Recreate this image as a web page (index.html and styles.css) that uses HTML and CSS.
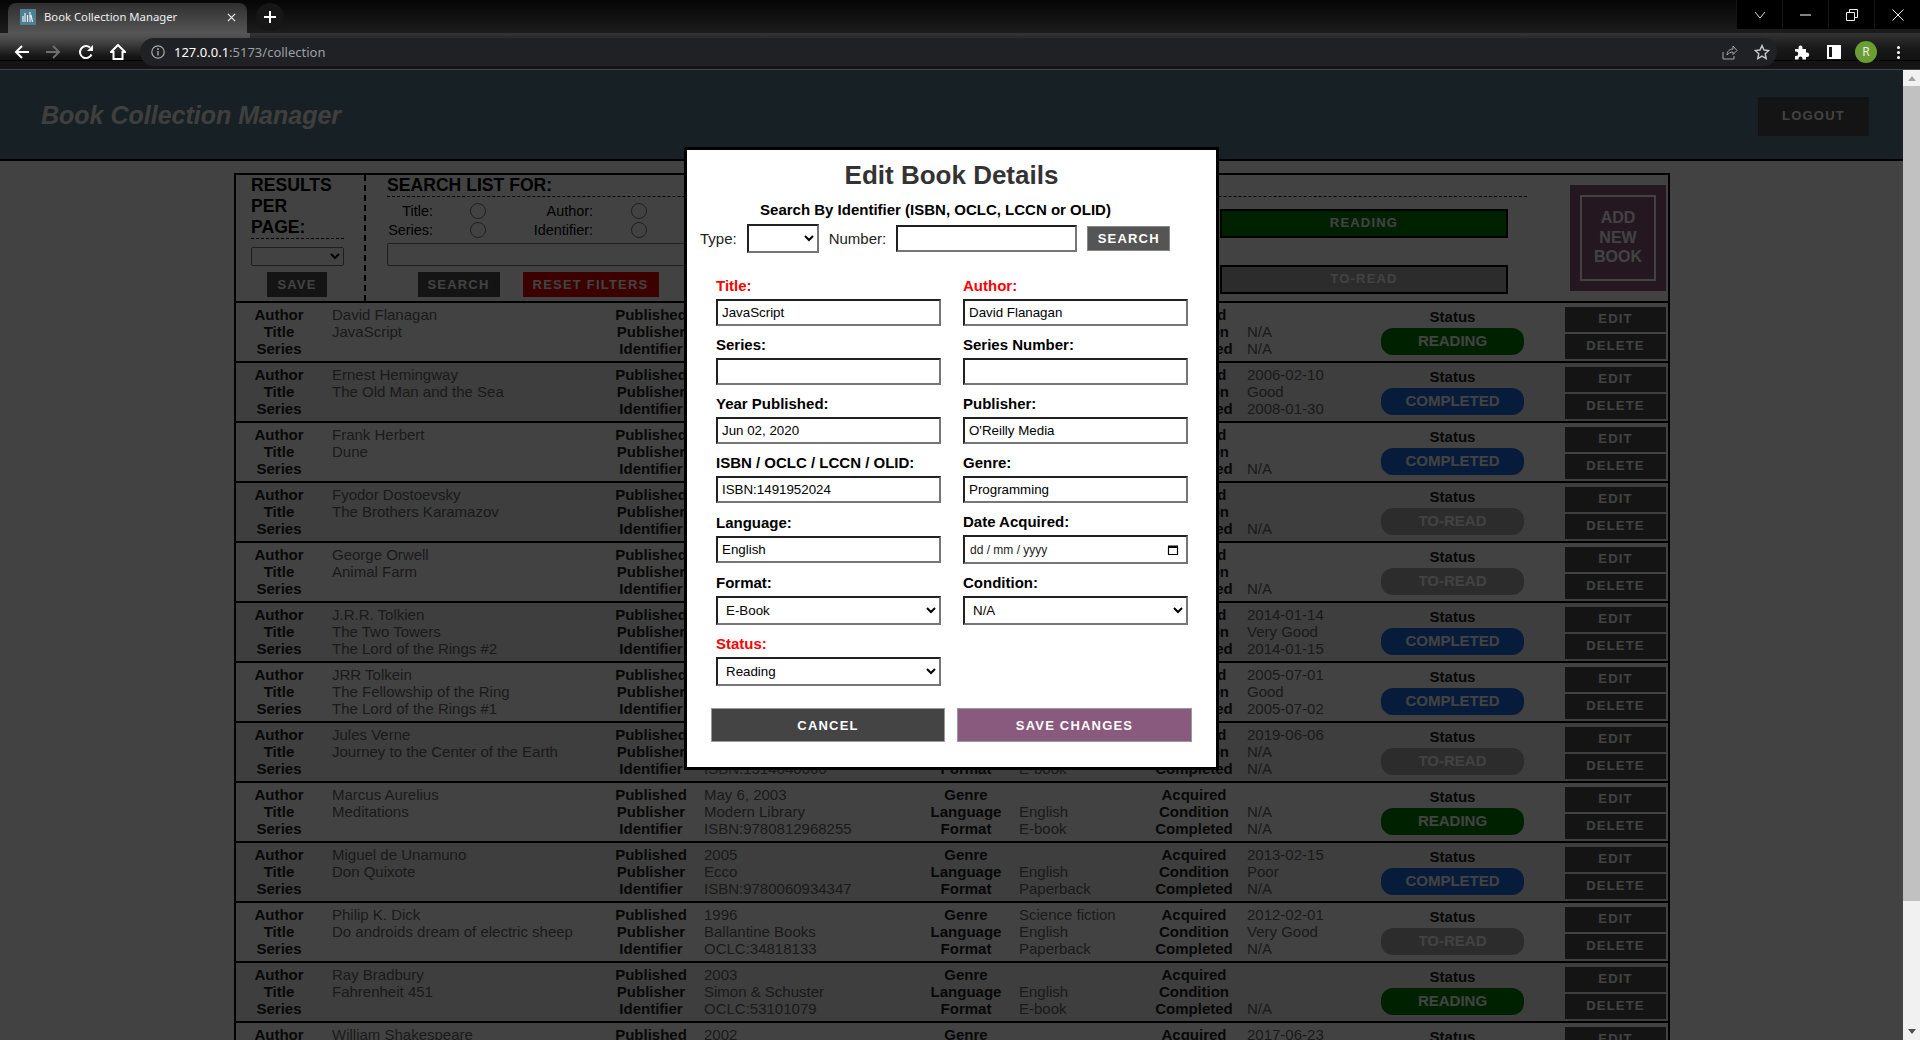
FILE: index.html
```html
<!DOCTYPE html>
<html lang="en">
<head>
    <meta charset="UTF-8">
    <title>Book Collection Manager</title>
    <link rel="stylesheet" href="styles.css">
</head>
<body>
    <div class="browser-top">
        <div class="tab-strip">
            <div class="tab">
                <svg class="favicon" viewBox="0 0 16 16"><rect width="16" height="16" fill="#4f7f92"/><path d="M3 13V7M5 13V4M7.5 13V6M10 13V3M12.5 13l-1.5-7" stroke="#e8eef0" stroke-width="1.2" fill="none"/></svg>
                <span class="tab-title">Book Collection Manager</span>
                <svg class="tab-close" viewBox="0 0 10 10"><path d="M1 1l8 8M9 1l-8 8" stroke="#e8e8e8" stroke-width="1.4"/></svg>
            </div>
            <div class="new-tab"><svg viewBox="0 0 12 12" width="12" height="12"><path d="M6 0v12M0 6h12" stroke="#fff" stroke-width="2"/></svg></div>
            <div class="window-controls">
                <div class="win-btn"><svg viewBox="0 0 12 8" width="12" height="8"><path d="M1 1l5 6 5-6" stroke="#ddd" fill="none"/></svg></div>
                <div class="win-btn"><svg viewBox="0 0 12 2" width="11" height="2"><path d="M0 1h12" stroke="#eee" stroke-width="1.2"/></svg></div>
                <div class="win-btn"><svg viewBox="0 0 12 12" width="12" height="12"><path d="M.5 3.5h8v8h-8zM3.5 3.5v-3h8v8h-3" stroke="#eee" fill="none"/></svg></div>
                <div class="win-btn"><svg viewBox="0 0 12 12" width="12" height="12"><path d="M.5.5l11 11M11.5.5l-11 11" stroke="#eee"/></svg></div>
            </div>
        </div>
        <div class="toolbar">
            <svg class="nav-icon" viewBox="0 0 16 16"><path d="M15 8H2M8 2L2 8l6 6" stroke="#fff" stroke-width="2" fill="none"/></svg>
            <svg class="nav-icon" viewBox="0 0 16 16"><path d="M1 8h13M8 2l6 6-6 6" stroke="#6e6e6e" stroke-width="2" fill="none"/></svg>
            <svg class="nav-icon" viewBox="0 0 16 16"><path d="M13.5 10.5A6 6 0 1 1 12 3.6" stroke="#fff" stroke-width="2" fill="none"/><path d="M9 7h6V1z" fill="#fff"/></svg>
            <svg class="nav-icon" viewBox="0 0 16 16"><path d="M8 1L1 8h2.5v7h9V8H15z" stroke="#fff" stroke-width="2" fill="none"/></svg>
            <div class="omnibox">
                <svg class="info-icon" viewBox="0 0 14 14"><circle cx="7" cy="7" r="6.2" stroke="#aaa" stroke-width="1.2" fill="none"/><path d="M7 6v4.5" stroke="#aaa" stroke-width="1.4"/><circle cx="7" cy="4" r=".9" fill="#aaa"/></svg>
                <span class="url"><b>127.0.0.1</b>:5173/collection</span>
                <svg class="omni-icon omni-share" viewBox="0 0 16 16"><path d="M1 8v7h11v-3M5 11c0-4 3-6 6-6V2l4 4.500-4 4V8c-2.500 0-4.500 1-6 3z" stroke="#a8a8a8" fill="none"/></svg>
                <svg class="omni-icon" viewBox="0 0 16 16"><path d="M8 1.500l2 4.500 4.800.5-3.600 3.200 1 4.800L8 12.100l-4.200 2.400 1-4.800L1.200 6.500 6 6z" stroke="#c8c8c8" stroke-width="1.400" fill="none"/></svg>
            </div>
            <svg class="ext-icon" viewBox="0 0 16 16"><path d="M1 5h3.500V3.500a2 2 0 0 1 4 0V5H12v3.500h1a2.200 2.200 0 0 1 0 4.500h-1v2.500H8.500v-1a2 2 0 0 0-4 0v1H1v-3.500h1a2.200 2.200 0 0 0 0-4.500H1z" fill="#fff"/></svg>
            <div class="side-icon"></div>
            <div class="avatar">R</div>
            <div class="menu-dots"><i></i><i></i><i></i></div>
        </div>
    </div>

    <div class="page">
        <div class="content">
            <header class="app-header">
                <h1>Book Collection Manager</h1>
                <button class="btn logout">LOGOUT</button>
            </header>

            <section class="collection">
                <div class="filters">
                    <div class="per-page">
                        <h3>RESULTS PER PAGE:</h3>
                        <select class="per-page-select"></select>
                        <button class="btn save-btn">SAVE</button>
                    </div>
                    <div class="search-list">
                        <h3>SEARCH LIST FOR:</h3>
                        <div class="search-body">
                            <div class="search-col">
                                <div class="radio-grid">
                                    <label>Title:</label><input type="radio" name="field">
                                    <label>Author:</label><input type="radio" name="field">
                                    <label>Series:</label><input type="radio" name="field">
                                    <label>Identifier:</label><input type="radio" name="field">
                                </div>
                                <input class="search-text" type="text">
                                <div class="search-actions">
                                    <button class="btn search-btn">SEARCH</button>
                                    <button class="btn reset-btn">RESET FILTERS</button>
                                </div>
                            </div>
                            <div class="status-filters">
                                <button class="status-filter reading">READING</button>
                                <button class="status-filter to-read">TO-READ</button>
                            </div>
                        </div>
                    </div>
                    <div class="add-book"><div class="add-book-inner">ADD<br>NEW<br>BOOK</div></div>
                </div>

                <div class="book">
                    <dl><dt>Author</dt><dd>David Flanagan</dd><dt>Title</dt><dd>JavaScript</dd><dt>Series</dt><dd></dd></dl>
                    <dl><dt>Published</dt><dd>Jun 02, 2020</dd><dt>Publisher</dt><dd>O'Reilly Media</dd><dt>Identifier</dt><dd>ISBN:1491952024</dd></dl>
                    <dl><dt>Genre</dt><dd>Programming</dd><dt>Language</dt><dd>English</dd><dt>Format</dt><dd>E-book</dd></dl>
                    <dl><dt>Acquired</dt><dd></dd><dt>Condition</dt><dd>N/A</dd><dt>Completed</dt><dd>N/A</dd></dl>
                    <div class="status-cell"><span>Status</span><div class="pill reading">READING</div></div>
                    <div class="actions"><button class="btn">EDIT</button><button class="btn">DELETE</button></div>
                </div>
                <div class="book">
                    <dl><dt>Author</dt><dd>Ernest Hemingway</dd><dt>Title</dt><dd>The Old Man and the Sea</dd><dt>Series</dt><dd></dd></dl>
                    <dl><dt>Published</dt><dd>1995</dd><dt>Publisher</dt><dd>Scribner</dd><dt>Identifier</dt><dd>ISBN:9780684801223</dd></dl>
                    <dl><dt>Genre</dt><dd></dd><dt>Language</dt><dd>English</dd><dt>Format</dt><dd>Paperback</dd></dl>
                    <dl><dt>Acquired</dt><dd>2006-02-10</dd><dt>Condition</dt><dd>Good</dd><dt>Completed</dt><dd>2008-01-30</dd></dl>
                    <div class="status-cell"><span>Status</span><div class="pill completed">COMPLETED</div></div>
                    <div class="actions"><button class="btn">EDIT</button><button class="btn">DELETE</button></div>
                </div>
                <div class="book">
                    <dl><dt>Author</dt><dd>Frank Herbert</dd><dt>Title</dt><dd>Dune</dd><dt>Series</dt><dd></dd></dl>
                    <dl><dt>Published</dt><dd>1990</dd><dt>Publisher</dt><dd>Ace Books</dd><dt>Identifier</dt><dd>ISBN:9780441172719</dd></dl>
                    <dl><dt>Genre</dt><dd></dd><dt>Language</dt><dd>English</dd><dt>Format</dt><dd>Paperback</dd></dl>
                    <dl><dt>Acquired</dt><dd></dd><dt>Condition</dt><dd></dd><dt>Completed</dt><dd>N/A</dd></dl>
                    <div class="status-cell"><span>Status</span><div class="pill completed">COMPLETED</div></div>
                    <div class="actions"><button class="btn">EDIT</button><button class="btn">DELETE</button></div>
                </div>
                <div class="book">
                    <dl><dt>Author</dt><dd>Fyodor Dostoevsky</dd><dt>Title</dt><dd>The Brothers Karamazov</dd><dt>Series</dt><dd></dd></dl>
                    <dl><dt>Published</dt><dd>2002</dd><dt>Publisher</dt><dd>Farrar</dd><dt>Identifier</dt><dd>ISBN:9780374528379</dd></dl>
                    <dl><dt>Genre</dt><dd></dd><dt>Language</dt><dd>English</dd><dt>Format</dt><dd>Paperback</dd></dl>
                    <dl><dt>Acquired</dt><dd></dd><dt>Condition</dt><dd></dd><dt>Completed</dt><dd>N/A</dd></dl>
                    <div class="status-cell"><span>Status</span><div class="pill to-read">TO-READ</div></div>
                    <div class="actions"><button class="btn">EDIT</button><button class="btn">DELETE</button></div>
                </div>
                <div class="book">
                    <dl><dt>Author</dt><dd>George Orwell</dd><dt>Title</dt><dd>Animal Farm</dd><dt>Series</dt><dd></dd></dl>
                    <dl><dt>Published</dt><dd>1996</dd><dt>Publisher</dt><dd>Signet</dd><dt>Identifier</dt><dd>ISBN:9780451526342</dd></dl>
                    <dl><dt>Genre</dt><dd></dd><dt>Language</dt><dd>English</dd><dt>Format</dt><dd>Paperback</dd></dl>
                    <dl><dt>Acquired</dt><dd></dd><dt>Condition</dt><dd></dd><dt>Completed</dt><dd>N/A</dd></dl>
                    <div class="status-cell"><span>Status</span><div class="pill to-read">TO-READ</div></div>
                    <div class="actions"><button class="btn">EDIT</button><button class="btn">DELETE</button></div>
                </div>
                <div class="book">
                    <dl><dt>Author</dt><dd>J.R.R. Tolkien</dd><dt>Title</dt><dd>The Two Towers</dd><dt>Series</dt><dd>The Lord of the Rings #2</dd></dl>
                    <dl><dt>Published</dt><dd>2012</dd><dt>Publisher</dt><dd>Mariner</dd><dt>Identifier</dt><dd>ISBN:9780547928203</dd></dl>
                    <dl><dt>Genre</dt><dd></dd><dt>Language</dt><dd>English</dd><dt>Format</dt><dd>Paperback</dd></dl>
                    <dl><dt>Acquired</dt><dd>2014-01-14</dd><dt>Condition</dt><dd>Very Good</dd><dt>Completed</dt><dd>2014-01-15</dd></dl>
                    <div class="status-cell"><span>Status</span><div class="pill completed">COMPLETED</div></div>
                    <div class="actions"><button class="btn">EDIT</button><button class="btn">DELETE</button></div>
                </div>
                <div class="book">
                    <dl><dt>Author</dt><dd>JRR Tolkein</dd><dt>Title</dt><dd>The Fellowship of the Ring</dd><dt>Series</dt><dd>The Lord of the Rings #1</dd></dl>
                    <dl><dt>Published</dt><dd>2012</dd><dt>Publisher</dt><dd>Mariner</dd><dt>Identifier</dt><dd>ISBN:9780547928210</dd></dl>
                    <dl><dt>Genre</dt><dd></dd><dt>Language</dt><dd>English</dd><dt>Format</dt><dd>Paperback</dd></dl>
                    <dl><dt>Acquired</dt><dd>2005-07-01</dd><dt>Condition</dt><dd>Good</dd><dt>Completed</dt><dd>2005-07-02</dd></dl>
                    <div class="status-cell"><span>Status</span><div class="pill completed">COMPLETED</div></div>
                    <div class="actions"><button class="btn">EDIT</button><button class="btn">DELETE</button></div>
                </div>
                <div class="book">
                    <dl><dt>Author</dt><dd>Jules Verne</dd><dt>Title</dt><dd>Journey to the Center of the Earth</dd><dt>Series</dt><dd></dd></dl>
                    <dl><dt>Published</dt><dd>2015</dd><dt>Publisher</dt><dd>CreateSpace</dd><dt>Identifier</dt><dd>ISBN:1514640666</dd></dl>
                    <dl><dt>Genre</dt><dd></dd><dt>Language</dt><dd>English</dd><dt>Format</dt><dd>E-book</dd></dl>
                    <dl><dt>Acquired</dt><dd>2019-06-06</dd><dt>Condition</dt><dd>N/A</dd><dt>Completed</dt><dd>N/A</dd></dl>
                    <div class="status-cell"><span>Status</span><div class="pill to-read">TO-READ</div></div>
                    <div class="actions"><button class="btn">EDIT</button><button class="btn">DELETE</button></div>
                </div>
                <div class="book">
                    <dl><dt>Author</dt><dd>Marcus Aurelius</dd><dt>Title</dt><dd>Meditations</dd><dt>Series</dt><dd></dd></dl>
                    <dl><dt>Published</dt><dd>May 6, 2003</dd><dt>Publisher</dt><dd>Modern Library</dd><dt>Identifier</dt><dd>ISBN:9780812968255</dd></dl>
                    <dl><dt>Genre</dt><dd></dd><dt>Language</dt><dd>English</dd><dt>Format</dt><dd>E-book</dd></dl>
                    <dl><dt>Acquired</dt><dd></dd><dt>Condition</dt><dd>N/A</dd><dt>Completed</dt><dd>N/A</dd></dl>
                    <div class="status-cell"><span>Status</span><div class="pill reading">READING</div></div>
                    <div class="actions"><button class="btn">EDIT</button><button class="btn">DELETE</button></div>
                </div>
                <div class="book">
                    <dl><dt>Author</dt><dd>Miguel de Unamuno</dd><dt>Title</dt><dd>Don Quixote</dd><dt>Series</dt><dd></dd></dl>
                    <dl><dt>Published</dt><dd>2005</dd><dt>Publisher</dt><dd>Ecco</dd><dt>Identifier</dt><dd>ISBN:9780060934347</dd></dl>
                    <dl><dt>Genre</dt><dd></dd><dt>Language</dt><dd>English</dd><dt>Format</dt><dd>Paperback</dd></dl>
                    <dl><dt>Acquired</dt><dd>2013-02-15</dd><dt>Condition</dt><dd>Poor</dd><dt>Completed</dt><dd>N/A</dd></dl>
                    <div class="status-cell"><span>Status</span><div class="pill completed">COMPLETED</div></div>
                    <div class="actions"><button class="btn">EDIT</button><button class="btn">DELETE</button></div>
                </div>
                <div class="book">
                    <dl><dt>Author</dt><dd>Philip K. Dick</dd><dt>Title</dt><dd>Do androids dream of electric sheep</dd><dt>Series</dt><dd></dd></dl>
                    <dl><dt>Published</dt><dd>1996</dd><dt>Publisher</dt><dd>Ballantine Books</dd><dt>Identifier</dt><dd>OCLC:34818133</dd></dl>
                    <dl><dt>Genre</dt><dd>Science fiction</dd><dt>Language</dt><dd>English</dd><dt>Format</dt><dd>Paperback</dd></dl>
                    <dl><dt>Acquired</dt><dd>2012-02-01</dd><dt>Condition</dt><dd>Very Good</dd><dt>Completed</dt><dd>N/A</dd></dl>
                    <div class="status-cell"><span>Status</span><div class="pill to-read">TO-READ</div></div>
                    <div class="actions"><button class="btn">EDIT</button><button class="btn">DELETE</button></div>
                </div>
                <div class="book">
                    <dl><dt>Author</dt><dd>Ray Bradbury</dd><dt>Title</dt><dd>Fahrenheit 451</dd><dt>Series</dt><dd></dd></dl>
                    <dl><dt>Published</dt><dd>2003</dd><dt>Publisher</dt><dd>Simon &amp; Schuster</dd><dt>Identifier</dt><dd>OCLC:53101079</dd></dl>
                    <dl><dt>Genre</dt><dd></dd><dt>Language</dt><dd>English</dd><dt>Format</dt><dd>E-book</dd></dl>
                    <dl><dt>Acquired</dt><dd></dd><dt>Condition</dt><dd></dd><dt>Completed</dt><dd>N/A</dd></dl>
                    <div class="status-cell"><span>Status</span><div class="pill reading">READING</div></div>
                    <div class="actions"><button class="btn">EDIT</button><button class="btn">DELETE</button></div>
                </div>
                <div class="book">
                    <dl><dt>Author</dt><dd>William Shakespeare</dd><dt>Title</dt><dd></dd><dt>Series</dt><dd></dd></dl>
                    <dl><dt>Published</dt><dd>2002</dd><dt>Publisher</dt><dd></dd><dt>Identifier</dt><dd></dd></dl>
                    <dl><dt>Genre</dt><dd></dd><dt>Language</dt><dd></dd><dt>Format</dt><dd></dd></dl>
                    <dl><dt>Acquired</dt><dd>2017-06-23</dd><dt>Condition</dt><dd></dd><dt>Completed</dt><dd></dd></dl>
                    <div class="status-cell"><span>Status</span></div>
                    <div class="actions"><button class="btn">EDIT</button></div>
                </div>
            </section>

            <!-- dark layer and dialog -->
            <div class="overlay">
                <div class="modal">
                    <h2>Edit Book Details</h2>
                    <p class="lookup-title">Search By Identifier (ISBN, OCLC, LCCN or OLID)</p>
                    <div class="lookup">
                        <span>Type:</span>
                        <select class="lookup-type"></select>
                        <span>Number:</span>
                        <input class="lookup-number" type="text">
                        <button class="lookup-btn">SEARCH</button>
                    </div>
                    <form class="book-form">
                        <div class="field"><label class="required">Title:</label><input type="text" value="JavaScript"></div>
                        <div class="field"><label class="required">Author:</label><input type="text" value="David Flanagan"></div>
                        <div class="field"><label>Series:</label><input type="text"></div>
                        <div class="field"><label>Series Number:</label><input type="text"></div>
                        <div class="field"><label>Year Published:</label><input type="text" value="Jun 02, 2020"></div>
                        <div class="field"><label>Publisher:</label><input type="text" value="O'Reilly Media"></div>
                        <div class="field"><label>ISBN / OCLC / LCCN / OLID:</label><input type="text" value="ISBN:1491952024"></div>
                        <div class="field"><label>Genre:</label><input type="text" value="Programming"></div>
                        <div class="field field-low"><label>Language:</label><input type="text" value="English"></div>
                        <div class="field">
                            <label>Date Acquired:</label>
                            <div class="date-input">
                                <span>dd / mm / yyyy</span>
                                <svg viewBox="0 0 12 12" width="12" height="12"><path d="M1.500 3.500h9v7h-9z" stroke="#000" stroke-width="1.200" fill="none"/><path d="M1 1.500h10v2.500H1z" fill="#000"/></svg>
                            </div>
                        </div>
                        <div class="field"><label>Format:</label><select><option>E-Book</option></select></div>
                        <div class="field"><label>Condition:</label><select><option>N/A</option></select></div>
                        <div class="field"><label class="required">Status:</label><select><option>Reading</option></select></div>
                    </form>
                    <div class="modal-actions">
                        <button class="cancel-btn">CANCEL</button>
                        <button class="save-changes-btn">SAVE CHANGES</button>
                    </div>
                </div>
            </div>
        </div>

        <div class="scrollbar">
            <div class="arrow-up"></div>
            <div class="thumb"></div>
            <div class="arrow-down"></div>
        </div>
    </div>
</body>
</html>
```

FILE: styles.css
```css
* {
    box-sizing: border-box;
}

html, body {
    margin: 0;
    height: 1040px;
    overflow: hidden;
}

body {
    font-family: "Liberation Sans", Arial, sans-serif;
    background-color: #000;
}

/* browser window */
.browser-top {
    height: 70px;
    font-family: "Noto Sans", "Open Sans", sans-serif;
}

.tab-strip {
    height: 33px;
    padding: 3px 0 0 8px;
    display: flex;
    background: linear-gradient(#050505, #1c1c1c);
}

.tab {
    width: 239px;
    height: 30px;
    padding: 0 12px 2px;
    display: flex;
    align-items: center;
    border-radius: 8px 8px 0 0;
    background: linear-gradient(#2e2e2e, #565656);
}

.favicon {
    width: 16px;
    height: 16px;
    margin-right: 8px;
}

.tab-title {
    color: #eee;
    font-size: 11.3px;
    flex: 1;
    margin-top: -2px;
}

.tab-close {
    width: 9px;
    height: 9px;
    margin-right: -1px;
}

.new-tab {
    width: 28px;
    height: 28px;
    margin-left: 9px;
    border-radius: 50%;
    background-color: #161616;
    display: flex;
    align-items: center;
    justify-content: center;
}

.window-controls {
    margin: -3px 0 0 auto;
    height: 29px;
    display: flex;
    background-color: #000;
}

.win-btn {
    width: 46px;
    display: flex;
    align-items: center;
    justify-content: center;
    border-left: 1px solid #141414;
}

.toolbar {
    height: 37px;
    padding: 5px 0 0 14px;
    display: flex;
    align-items: flex-start;
    background:
        linear-gradient(#565656, rgba(86, 86, 86, 0)) no-repeat 0 0 / 250px 24px,
        linear-gradient(#333, #191919 40%, #121212 72%, #000 73%, #000 76%, #141414 77%, #141414 97%, #444 97%);
}

.nav-icon {
    width: 16px;
    height: 16px;
    margin: 6px 16px 0 0;
}

.nav-icon:first-child {
    margin-right: 15px;
}

.nav-icon:nth-child(2) {
    margin-right: 17px;
}

.omnibox {
    width: 1637px;
    height: 28px;
    margin-left: -2px;
    padding: 0 7px 0 11px;
    display: flex;
    align-items: center;
    border-radius: 14px;
    background-color: #202124;
}

.info-icon {
    width: 14px;
    height: 14px;
    margin-right: 9px;
}

.url {
    color: #9aa0a6;
    font-size: 13px;
    flex: 1;
}

.url b {
    color: #fff;
    font-weight: normal;
}

.omni-icon {
    width: 16px;
    height: 16px;
}

.omni-share {
    margin-right: 16px;
}

.ext-icon {
    width: 16px;
    height: 16px;
    margin: 6px 0 0 17px;
}

.side-icon {
    width: 14px;
    height: 14px;
    margin: 7px 0 0 17px;
    border: solid #fff;
    border-width: 2px 2px 2px 9px;
    transform: scaleX(-1);
}

.avatar {
    width: 22px;
    height: 22px;
    margin: 3px 0 0 14px;
    border-radius: 50%;
    background-color: #6a9e32;
    color: #eee;
    font-size: 12px;
    text-align: center;
    line-height: 22px;
}

.menu-dots {
    margin: 8px 0 0 20px;
    display: flex;
    flex-direction: column;
    gap: 2px;
}

.menu-dots i {
    width: 3px;
    height: 3px;
    background-color: #fff;
    border-radius: 50%;
}

/* page */
.page {
    height: 970px;
    display: flex;
    overflow: hidden;
}

.content {
    position: relative;
    width: 1903px;
    height: 970px;
    overflow: hidden;
    background-color: #fff;
}

.scrollbar {
    width: 17px;
    background-color: #f1f1f1;
    display: flex;
    flex-direction: column;
    align-items: center;
}

.arrow-up {
    margin: 6px 0 5px;
    border: 4px solid transparent;
    border-top: 0;
    border-bottom: 5px solid #a3a3a3;
}

.thumb {
    width: 17px;
    height: 815px;
    background-color: #c1c1c1;
}

.arrow-down {
    margin-top: auto;
    margin-bottom: 6px;
    border: 4px solid transparent;
    border-bottom: 0;
    border-top: 5px solid #505050;
}

.app-header {
    height: 91px;
    padding: 2px 34px 0 41px;
    display: flex;
    align-items: center;
    justify-content: space-between;
    background-color: #587b8a;
    border-bottom: 2px solid #000;
}

.app-header h1 {
    margin: 0;
    color: #f2f2f2;
    font-size: 25px;
    font-style: italic;
}

.btn {
    background-color: #4d4d4d;
    color: #fff;
    border: none;
    font-family: "Liberation Sans", Arial, sans-serif;
    font-weight: bold;
    font-size: 13px;
    letter-spacing: 1.2px;
    padding: 0 0 1px;
}

.logout {
    width: 111px;
    height: 39px;
    margin-top: 1px;
}

.collection {
    width: 1436px;
    margin: 12px 0 0 234px;
    border: 2px solid #000;
}

/* filter area */
.filters {
    height: 128px;
    display: flex;
    border-bottom: 2px solid #000;
}

.filters h3 {
    margin: 0;
    color: #000;
    font-size: 17.6px;
    line-height: 21px;
}

.per-page {
    width: 130px;
    padding: 0 20px 0 15px;
    border-right: 2px dashed #000;
}

.per-page h3 {
    border-bottom: 1px dashed #000;
}

.per-page-select {
    display: block;
    width: 93px;
    height: 19px;
    margin-top: 8px;
}

.save-btn {
    display: block;
    width: 60px;
    height: 25px;
    margin: 6px 0 0 16px;
}

.search-list {
    width: 1140px;
    margin-left: 21px;
}

.search-list h3 {
    height: 22px;
    border-bottom: 1px dashed #000;
}

.search-body {
    display: flex;
    justify-content: space-between;
    padding-right: 19px;
}

.search-col {
    width: 304px;
}

.radio-grid {
    display: grid;
    grid-template-columns: 47px 90px 70px 46px;
    grid-auto-rows: 19px;
    align-items: center;
    margin: 4px 0 0 -1px;
    font-size: 14.4px;
}

.radio-grid label {
    text-align: right;
}

.radio-grid input {
    width: 16px;
    height: 16px;
    margin: 0 0 0 37px;
}

.radio-grid input:nth-child(4n) {
    margin-left: 38px;
}

.search-text {
    display: block;
    width: 100%;
    height: 23px;
    margin-top: 4px;
    border: 1px solid #767676;
    border-radius: 2px;
}

.search-actions {
    display: flex;
    justify-content: center;
    gap: 23px;
    margin-top: 6px;
    padding-right: 2px;
}

.search-btn {
    width: 82px;
    height: 25px;
}

.reset-btn {
    width: 136px;
    height: 25px;
    background-color: #e80000;
}

.status-filters {
    display: flex;
    flex-direction: column;
    gap: 27px;
    margin-top: 12px;
}

.status-filter {
    width: 288px;
    height: 29px;
    padding: 0 0 2px;
    border: 2px solid #000;
    color: #fff;
    font-family: "Liberation Sans", Arial, sans-serif;
    font-weight: bold;
    font-size: 13px;
    letter-spacing: 1.2px;
}

.reading {
    background-color: #008000;
}

.to-read {
    background-color: #aaa;
}

.completed {
    background-color: #1a6ee0;
}

.add-book {
    width: 96px;
    height: 106px;
    margin: 10px 0 0 43px;
    padding: 10px;
    background-color: #8a5a7e;
}

.add-book-inner {
    height: 86px;
    border: 2px solid #fff;
    color: #fff;
    font-size: 16px;
    font-weight: bold;
    line-height: 19.5px;
    text-align: center;
    padding-top: 11px;
}

/* book rows */
.book {
    height: 60px;
    padding: 4px 0 0 1px;
    display: grid;
    grid-template-columns: 372px 315px 228px 229px 143px 101px;
    border-bottom: 2px solid #000;
    background-color: #fff;
    font-size: 15px;
}

.book:nth-child(odd) {
    background-color: #eee;
}

.book dl {
    margin: -1px 0 0;
    display: grid;
    grid-template-columns: 84px 1fr;
    grid-auto-rows: 17px;
    column-gap: 11px;
    line-height: 17px;
}

.book dt {
    font-weight: bold;
    text-align: center;
    color: #222;
}

.book dd {
    margin: 0;
    color: #666;
    white-space: nowrap;
}

.status-cell {
    text-align: center;
    font-weight: bold;
    line-height: 19px;
    color: #222;
}

.pill {
    height: 27px;
    margin-top: 2px;
    border-radius: 12px;
    color: #fff;
    font-size: 15px;
    line-height: 25px;
}

.actions {
    margin: 0 0 0 41px;
    width: 101px;
    display: flex;
    flex-direction: column;
    gap: 2px;
}

.actions .btn {
    height: 25px;
    padding-bottom: 2px;
}

/* dialog */
.overlay {
    position: absolute;
    inset: 0;
    padding-top: 77px;
    display: flex;
    justify-content: center;
    align-items: flex-start;
    background-color: rgba(0, 0, 0, 0.74);
}

.modal {
    width: 535px;
    height: 623px;
    border: 3px solid #000;
    background-color: #fff;
}

.modal h2 {
    margin: 9px 0 0;
    color: #333;
    font-size: 26px;
    line-height: 32px;
    text-align: center;
}

.lookup-title {
    margin: 10px 0 0;
    padding-right: 32px;
    font-size: 15px;
    font-weight: bold;
    line-height: 17px;
    text-align: center;
    color: #000;
}

.lookup {
    margin-top: 6px;
    padding-left: 13px;
    display: flex;
    align-items: center;
    font-size: 15px;
    color: #222;
    gap: 10px;
}

.lookup-type {
    width: 72px;
    height: 29px;
}

.lookup-number {
    width: 181px;
    height: 27px;
}

.lookup-btn {
    width: 83px;
    height: 25px;
    background-color: #555;
    color: #fff;
    border: 1px solid #888;
    font-family: "Liberation Sans", Arial, sans-serif;
    font-weight: bold;
    font-size: 13px;
    letter-spacing: 1.2px;
    padding: 0;
}

.book-form {
    margin-top: 24px;
    padding-left: 29px;
    display: grid;
    grid-template-columns: 225px 225px;
    column-gap: 22px;
    row-gap: 10px;
    align-items: start;
}

.field label {
    display: block;
    font-size: 15px;
    font-weight: bold;
    line-height: 17px;
    margin-bottom: 5px;
    color: #000;
}

.field label.required {
    color: #ff0000;
}

.field-low {
    padding-top: 1px;
}

.modal input[type="text"], .modal select, .date-input {
    border: 2px inset #767676;
    background-color: #fff;
    color: #000;
    font-family: "Liberation Sans", Arial, sans-serif;
    font-size: 13.33px;
    border-radius: 0;
}

.field input, .field select {
    display: block;
    width: 225px;
    height: 27px;
    padding: 1px 4px;
}

.field select {
    height: 29px;
}

.date-input {
    width: 225px;
    height: 29px;
    padding: 0 7px 0 5px;
    display: flex;
    align-items: center;
    justify-content: space-between;
}

.date-input span {
    font-size: 12px;
    color: #222;
}

.modal-actions {
    margin-top: 22px;
    padding-left: 24px;
    display: flex;
    gap: 12px;
}

.cancel-btn, .save-changes-btn {
    height: 34px;
    color: #fff;
    font-family: "Liberation Sans", Arial, sans-serif;
    font-weight: bold;
    font-size: 13px;
    letter-spacing: 1.2px;
    padding: 0;
    border: 1px solid #999;
}

.cancel-btn {
    width: 234px;
    background-color: #444;
}

.save-changes-btn {
    width: 235px;
    background-color: #8a5a7e;
}
```
